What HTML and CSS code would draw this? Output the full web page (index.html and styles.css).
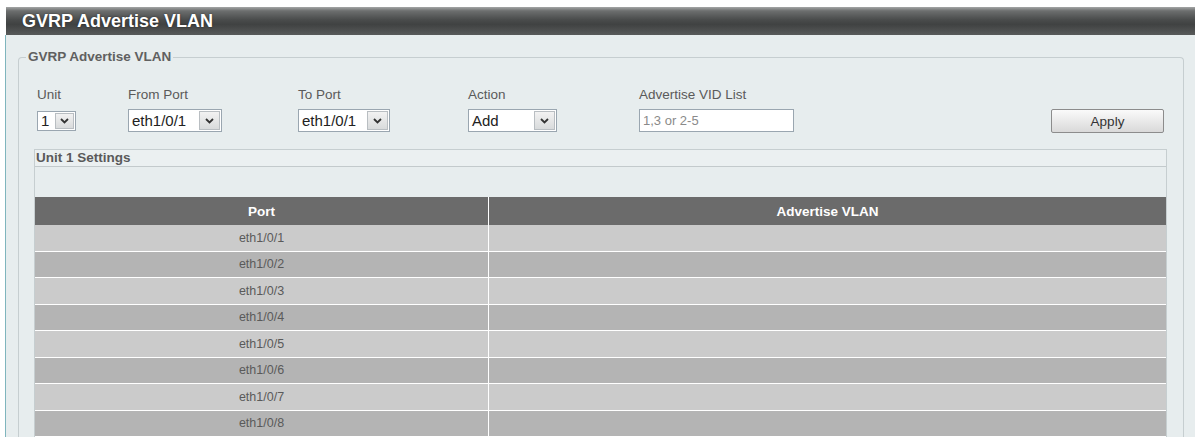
FILE: index.html
```html
<!DOCTYPE html>
<html lang="en">
<head>
    <meta charset="UTF-8">
    <meta name="viewport" content="width=device-width, initial-scale=1.0">
    <title>GVRP Advertise VLAN</title>
    <link rel="stylesheet" href="styles.css">
</head>
<body>

    <div class="window">
        <div class="titlebar">GVRP Advertise VLAN</div>

        <div class="panel">
            <fieldset class="group">
                <legend>GVRP Advertise VLAN</legend>

                <div class="form-row">
                    <div class="field field-unit">
                        <label>Unit</label>
                        <div class="select select-unit">
                            <span class="value">1</span>
                            <span class="arrow"><svg width="9" height="6" viewBox="0 0 9 6"><polyline points="1,1 4.5,4.5 8,1" fill="none" stroke="#333" stroke-width="1.8"/></svg></span>
                        </div>
                    </div>

                    <div class="field field-port">
                        <label>From Port</label>
                        <div class="select select-port">
                            <span class="value">eth1/0/1</span>
                            <span class="arrow"><svg width="9" height="6" viewBox="0 0 9 6"><polyline points="1,1 4.5,4.5 8,1" fill="none" stroke="#333" stroke-width="1.8"/></svg></span>
                        </div>
                    </div>

                    <div class="field field-port">
                        <label>To Port</label>
                        <div class="select select-port select-to">
                            <span class="value">eth1/0/1</span>
                            <span class="arrow"><svg width="9" height="6" viewBox="0 0 9 6"><polyline points="1,1 4.5,4.5 8,1" fill="none" stroke="#333" stroke-width="1.8"/></svg></span>
                        </div>
                    </div>

                    <div class="field field-action">
                        <label>Action</label>
                        <div class="select select-action">
                            <span class="value">Add</span>
                            <span class="arrow"><svg width="9" height="6" viewBox="0 0 9 6"><polyline points="1,1 4.5,4.5 8,1" fill="none" stroke="#333" stroke-width="1.8"/></svg></span>
                        </div>
                    </div>

                    <div class="field field-vid">
                        <label for="vidList">Advertise VID List</label>
                        <input type="text" id="vidList" placeholder="1,3 or 2-5">
                    </div>

                    <button class="apply">Apply</button>
                </div>

                <div class="settings">
                    <div class="settings-head">Unit 1 Settings</div>
                    <div class="settings-gap"></div>

                    <table class="ports">
                        <thead>
                            <tr><th class="col-port">Port</th><th>Advertise VLAN</th></tr>
                        </thead>
                        <tbody>
                            <tr><td>eth1/0/1</td><td></td></tr>
                            <tr><td>eth1/0/2</td><td></td></tr>
                            <tr><td>eth1/0/3</td><td></td></tr>
                            <tr><td>eth1/0/4</td><td></td></tr>
                            <tr><td>eth1/0/5</td><td></td></tr>
                            <tr><td>eth1/0/6</td><td></td></tr>
                            <tr><td>eth1/0/7</td><td></td></tr>
                            <tr><td>eth1/0/8</td><td></td></tr>
                        </tbody>
                    </table>
                </div>
            </fieldset>
        </div>
    </div>

</body>
</html>
```

FILE: styles.css
```css
/* Page */
body {
    margin: 0;
    background: #fff;
    font-family: "Liberation Sans", Arial, sans-serif;
    color: #5a5a5a;
    overflow: hidden;
}

.window {
    padding: 7px 0 0 5px;
}

/* Title bar */
.titlebar {
    height: 28px;
    line-height: 28px;
    padding-left: 16px;
    margin-left: 1px;
    color: #fff;
    font-size: 18px;
    font-weight: bold;
    text-shadow: 0 0 2px rgba(0, 0, 0, 0.5);
    background: linear-gradient(#a4a6a6 0%, #6c6e6e 14%, #4a4c4c 45%, #404242 62%, #585a5a 100%);
}

/* Panel */
.panel {
    background: #e7edee;
    border-left: 1px solid #7fb5bd;
    padding: 15px 11px 0 12px;
}

.group {
    margin: 0;
    padding: 23px 16px 0 15px;
    border: 1px solid #c6ced0;
    border-bottom: none;
    border-radius: 4px 4px 0 0;
}

.group legend {
    margin-left: -8px;
    padding: 0 2px;
    line-height: 14px;
    font-size: 13.5px;
    font-weight: bold;
    color: #606060;
}

/* Form row */
.form-row {
    display: flex;
    align-items: flex-start;
    padding: 0 3px;
}

.field {
    display: flex;
    flex-direction: column;
    gap: 6px;
}

.field label {
    line-height: 16px;
    font-size: 13.5px;
    color: #5a5a5a;
}

.field-unit { width: 91px; }
.field-port { width: 170px; }
.field-action { width: 171px; }

.select {
    display: flex;
    align-items: stretch;
    height: 23px;
    box-sizing: border-box;
    border: 1px solid #9aa6b0;
    background: #fff;
}

.select .value {
    flex: 1;
    padding-left: 3px;
    line-height: 21px;
    font-size: 15px;
    color: #222;
}

.select .arrow {
    width: 21px;
    margin: 1px;
    display: flex;
    align-items: center;
    justify-content: center;
    box-sizing: border-box;
    border: 1px solid #b9bec2;
    background: linear-gradient(#f2f2f2, #d9dbdc);
}

.select-unit {
    width: 39px;
    height: 20px;
    margin-top: 2px;
}

.select-unit .value {
    line-height: 18px;
}

.select-unit .arrow {
    width: 19px;
}

.select-port { width: 94px; }
.select-to { width: 92px; }
.select-action { width: 89px; }

.field-vid input {
    width: 155px;
    height: 23px;
    box-sizing: border-box;
    margin: 0;
    padding: 0 3px;
    border: 1px solid #9aa6b0;
    font-family: inherit;
    font-size: 13px;
}

.field-vid input::placeholder {
    color: #8a8a8a;
}

/* Apply button */
.apply {
    margin: 22px 0 0 auto;
    width: 113px;
    height: 24px;
    border: 1px solid #8c8c8c;
    border-radius: 2px;
    background: linear-gradient(#fafafa, #d9d9d9);
    font-family: inherit;
    font-size: 13.5px;
    color: #333;
}

/* Unit settings box */
.settings {
    margin-top: 16px;
    border: 1px solid #c6ced0;
    border-bottom: none;
}

.settings-head {
    height: 16px;
    line-height: 16px;
    padding-left: 1px;
    font-size: 13.5px;
    font-weight: bold;
    color: #5a5a5a;
    background: #ebf0f1;
    border-bottom: 1px solid #c3cacc;
}

.settings-gap {
    height: 30px;
}

/* Port table */
.ports {
    width: 100%;
    border-collapse: collapse;
    table-layout: fixed;
}

.ports th {
    height: 28px;
    padding: 0;
    background: #6b6b6b;
    color: #fff;
    font-size: 13.5px;
    font-weight: bold;
}

.ports th.col-port {
    width: 453px;
    border-right: 1px solid #fff;
}

.ports td {
    height: 25.5px;
    padding: 0;
    text-align: center;
    font-size: 12.5px;
    color: #5a5a5a;
    border-bottom: 1px solid #fff;
}

.ports td:first-child {
    border-right: 1px solid #fff;
}

.ports tbody tr:nth-child(odd) td {
    background: #cbcbcb;
}

.ports tbody tr:nth-child(even) td {
    background: #b4b4b4;
}
```
